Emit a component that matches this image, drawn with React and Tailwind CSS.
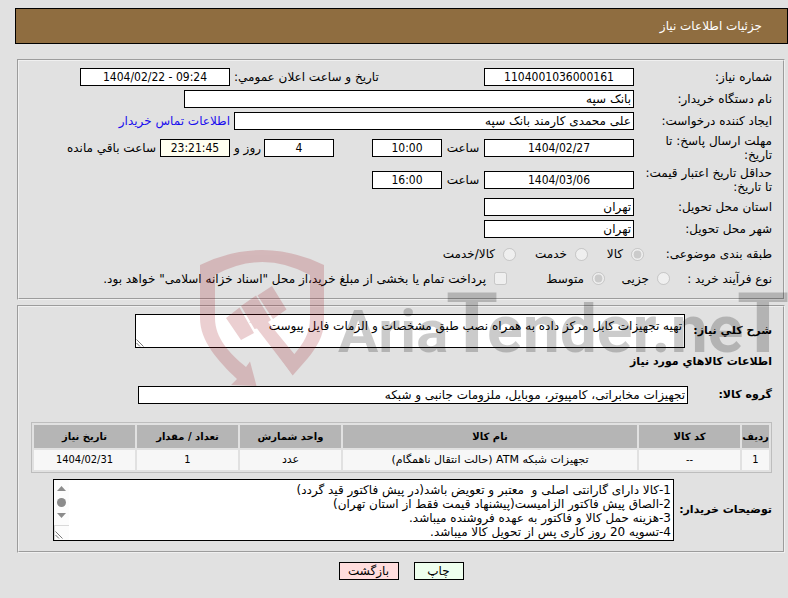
const field =
  "h-[18px] shrink-0 rounded-none border border-black bg-white px-[2px] outline-none";
const numeric =
  field + " text-center font-['DejaVu_Sans_Condensed','DejaVu_Sans',sans-serif]";
const panel =
  "ml-[17px] mr-[3px] border-2 border-[#f0f0f0] [border-style:groove] pr-[11px]";

const digits = "font-['DejaVu_Sans_Condensed','DejaVu_Sans',sans-serif]";
const columns = [
  { title: "ردیف", value: "1", width: "w-[27px]", font: digits },
  { title: "کد کالا", value: "--", width: "w-[101px]", font: digits },
  { title: "نام کالا", value: "تجهیزات شبکه ATM (حالت انتقال ناهمگام)", width: "", font: "" },
  { title: "واحد شمارش", value: "عدد", width: "w-[101px]", font: "" },
  { title: "تعداد / مقدار", value: "1", width: "w-[101px]", font: digits },
  { title: "تاریخ نیاز", value: "1404/02/31", width: "w-[101px]", font: digits },
];

const notes = `1-کالا دارای گارانتی اصلی و  معتبر و تعویض باشد(در پیش فاکتور قید گردد)
2-الصاق پیش فاکتور الزامیست(پیشنهاد قیمت فقط از استان تهران)
3-هزینه حمل کالا و فاکتور به عهده فروشنده میباشد.
4-تسویه 20 روز کاری پس از تحویل کالا میباشد.`;

function Row({ id, label, tall, children }) {
  return (
    <div className={`flex items-center ${tall ? "h-8" : "h-[22px]"}`}>
      <label htmlFor={id} className="w-[138px] shrink-0">
        {label}
      </label>
      {children}
    </div>
  );
}

function Choice({ type = "radio", name, label, checked, className = "" }) {
  return (
    <label className={`flex shrink-0 items-center gap-2 whitespace-nowrap ${className}`}>
      <input
        type={type}
        name={name}
        defaultChecked={checked}
        disabled
        className="size-[13px] shrink-0"
      />
      <span>{label}</span>
    </label>
  );
}

function Grip() {
  return (
    <svg
      viewBox="0 0 8 8"
      className="pointer-events-none absolute bottom-[1px] left-[1px] size-2"
      stroke="#555"
      strokeWidth="0.8"
    >
      <path d="M0.5 0.5 7.5 7.5M0.5 4 4 7.5" />
    </svg>
  );
}

function Watermark() {
  return (
    <div
      dir="ltr"
      className="pointer-events-none absolute inset-x-0 top-[250px] h-[138px] overflow-hidden"
    >
      <svg width="660" height="138" viewBox="0 0 660 138" className="ml-[200px] max-w-none">
        <g fill="#a0141e" opacity="0.2">
          <path d="M0 15Q62-15 124 15V71C124 86 116 98 108 108L92.700 125.500 55 72 49 73 57 66 69 74 94 104.500C103 94 110 84 110 68V25Q62-1 15 25V68C15 88 29 103 46 117L50 111.500 56.500 136 31 135 37 129C18 111 0 91 0 68Z" />
          <path d="M26 68 39.500 57.500 54 83 41 90ZM41 56 56 45.500 71 70 68 72 95 105 92.700 125 57 78.500 54.500 79ZM57.500 45.500 72 36 86.500 59.500 73 69Z" />
        </g>
        <g
          opacity="0.2"
          fontWeight="bold"
          className="font-['Roboto','Liberation_Sans',sans-serif]"
        >
          <text y="102" fontSize="60" x="138">Aria</text>
          <text y="102" fontSize="84" x="246">T</text>
          <text y="102" fontSize="66" x="287">ender.ne</text>
          <text y="102" fontSize="84" x="537">T</text>
        </g>
      </svg>
    </div>
  );
}

export default function App() {
  return (
    <div
      dir="rtl"
      className="relative min-h-screen overflow-hidden bg-[#e1e1e1] pt-2 font-['DejaVu_Sans',sans-serif] text-[12px] leading-[14px] text-black"
    >
      <header className="ml-[15px] flex h-9 items-center border border-black bg-[#8f6d40] pr-[25px] text-white">
        <h1>جزئیات اطلاعات نیاز</h1>
      </header>

      <main>
        <section className={`${panel} mt-[15px] pb-[7px] pt-[5px]`}>
          <Row id="number" label="شماره نیاز:">
            <div className="flex w-[400px] shrink-0 items-center justify-between">
              <input id="number" dir="ltr" readOnly defaultValue="1104001036000161" className={`${numeric} w-[150px]`} />
              <label htmlFor="announced" className="whitespace-nowrap">تاریخ و ساعت اعلان عمومي:</label>
            </div>
            <input id="announced" dir="ltr" readOnly defaultValue="1404/02/22 - 09:24" className={`${numeric} mr-1 w-[150px]`} />
          </Row>

          <Row id="buyer" label="نام دستگاه خریدار:">
            <input id="buyer" readOnly defaultValue="بانک سپه" className={`${field} w-[450px]`} />
          </Row>

          <Row id="creator" label="ایجاد کننده درخواست:">
            <input id="creator" readOnly defaultValue="علی محمدی کارمند بانک سپه" className={`${field} w-[400px]`} />
            <a href="#contact" className="mr-1 whitespace-nowrap text-[#1a0dee]">اطلاعات تماس خریدار</a>
          </Row>

          <Row id="deadline" tall label={<>مهلت ارسال پاسخ: تا<br />تاریخ:</>}>
            <div className="flex w-[400px] shrink-0 items-center">
              <input id="deadline" dir="ltr" readOnly defaultValue="1404/02/27" className={`${numeric} w-[150px]`} />
              <label htmlFor="deadline-hour" className="w-[42px] shrink-0 text-center">ساعت</label>
              <input id="deadline-hour" dir="ltr" readOnly defaultValue="10:00" className={`${numeric} w-[70px]`} />
              <input id="days" dir="ltr" readOnly defaultValue="4" className={`${numeric} mr-[38px] w-[70px]`} />
              <label htmlFor="days" className="mr-[3px] whitespace-nowrap">روز و</label>
            </div>
            <input id="left" dir="ltr" readOnly defaultValue="23:21:45" className="mr-1 h-[18px] w-[70px] shrink-0 border border-black bg-[#fffff0] px-[2px] text-center font-['DejaVu_Sans_Condensed','DejaVu_Sans',sans-serif] outline-none" />
            <label htmlFor="left" className="mr-1 whitespace-nowrap">ساعت باقي مانده</label>
          </Row>

          <Row id="validity" tall label={<>حداقل تاریخ اعتبار قیمت:<br />تا تاریخ:</>}>
            <input id="validity" dir="ltr" readOnly defaultValue="1404/03/06" className={`${numeric} w-[150px]`} />
            <label htmlFor="validity-hour" className="w-[42px] shrink-0 text-center">ساعت</label>
            <input id="validity-hour" dir="ltr" readOnly defaultValue="16:00" className={`${numeric} w-[70px]`} />
          </Row>

          <Row id="province" label="استان محل تحویل:">
            <input id="province" readOnly defaultValue="تهران" className={`${field} w-[150px]`} />
          </Row>

          <Row id="city" label="شهر محل تحویل:">
            <input id="city" readOnly defaultValue="تهران" className={`${field} w-[150px]`} />
          </Row>

          <div role="radiogroup" aria-label="طبقه بندی موضوعی" className="mt-[2px] flex h-6 items-center">
            <span className="w-[128px] shrink-0">طبقه بندی موضوعی:</span>
            <Choice name="subject" label="کالا" checked className="w-[56px]" />
            <Choice name="subject" label="خدمت" className="w-[72px]" />
            <Choice name="subject" label="کالا/خدمت" />
          </div>

          <div role="radiogroup" aria-label="نوع فرآیند خرید" className="flex h-[25px] items-center">
            <span className="w-[102px] shrink-0 whitespace-nowrap">نوع فرآیند خرید :</span>
            <Choice name="process" label="جزیی" className="w-[65px]" />
            <Choice name="process" label="متوسط" checked className="w-[98px]" />
            <Choice
              type="checkbox"
              name="treasury"
              label={'پرداخت تمام یا بخشی از مبلغ خرید،از محل "اسناد خزانه اسلامی" خواهد بود.'}
            />
          </div>
        </section>

        <section className={`${panel} mt-[5px] pb-[10px] pt-[7px]`}>
          <div className="flex items-center">
            <label htmlFor="summary" className="w-[87px] shrink-0 whitespace-nowrap text-[11px] font-bold">شرح کلي نیاز:</label>
            <div className="relative ml-[116px] flex flex-1">
              <textarea
                id="summary"
                readOnly
                defaultValue="تهیه تجهیزات کابل مرکز داده به همراه نصب طبق مشخصات و الزمات فایل پیوست"
                className="h-[34px] w-full resize-none overflow-hidden border border-black bg-white px-[2px] py-1 outline-none"
              />
              <Grip />
            </div>
          </div>

          <h2 className="flex h-7 items-center text-[11px] font-bold">اطلاعات کالاهاي مورد نیاز</h2>

          <div className="mt-[10px] flex items-center">
            <label htmlFor="group" className="w-[84px] shrink-0 text-[11px] font-bold">گروه کالا:</label>
            <input
              id="group"
              readOnly
              defaultValue="تجهیزات مخابراتی، کامپیوتر، موبایل، ملزومات جانبی و شبکه"
              className={`${field} ml-[119px] flex-1`}
            />
          </div>

          <div className="ml-3 mt-[18px]">
            <table className="w-full table-fixed border-separate border-spacing-[2px] border border-[#bdbdbd] text-center">
              <thead>
                <tr className="h-[23px]">
                  {columns.map((c) => (
                    <th key={c.title} className={`${c.width} whitespace-nowrap bg-[#b5b5b5] p-0 text-[10px] font-bold`}>
                      {c.title}
                    </th>
                  ))}
                </tr>
              </thead>
              <tbody>
                <tr className="h-5">
                  {columns.map((c) => (
                    <td key={c.title} className={`${c.font} bg-[#f7f7f7] p-0 text-[11px]`}>{c.value}</td>
                  ))}
                </tr>
              </tbody>
            </table>
          </div>

          <div className="mt-[6px] flex items-center">
            <label htmlFor="notes" className="w-[98px] shrink-0 whitespace-nowrap text-[11px] font-bold">توضیحات خریدار:</label>
            <div className="relative ml-[34px] flex h-[62px] flex-1 border border-black bg-white">
              <textarea
                id="notes"
                readOnly
                defaultValue={notes}
                className="flex-1 resize-none overflow-hidden px-[2px] py-[3px] outline-none"
              />
              <div className="flex w-[15px] flex-col items-center bg-[#fcfcfc]">
                <svg viewBox="0 0 15 45" className="h-[45px] w-[15px]" fill="#8b8b8b">
                  <path d="M3 11 7.500 6 12 11Z" />
                  <circle cx="7.500" cy="22.500" r="4.500" />
                  <path d="M3 33 7.500 38 12 33Z" />
                </svg>
                <div className="w-full flex-1 border-l border-t border-[#d9d9d9]" />
              </div>
              <Grip />
            </div>
          </div>
        </section>

        <div className="ml-[17px] mr-[3px] mt-[9px] flex justify-center gap-[15px]">
          <button type="button" className="h-[18px] w-[50px] border border-black bg-[#eeffee]">چاپ</button>
          <button type="button" className="h-[18px] w-[60px] border border-black bg-[#ffdddd]">بازگشت</button>
        </div>
      </main>

      <Watermark />
    </div>
  );
}
